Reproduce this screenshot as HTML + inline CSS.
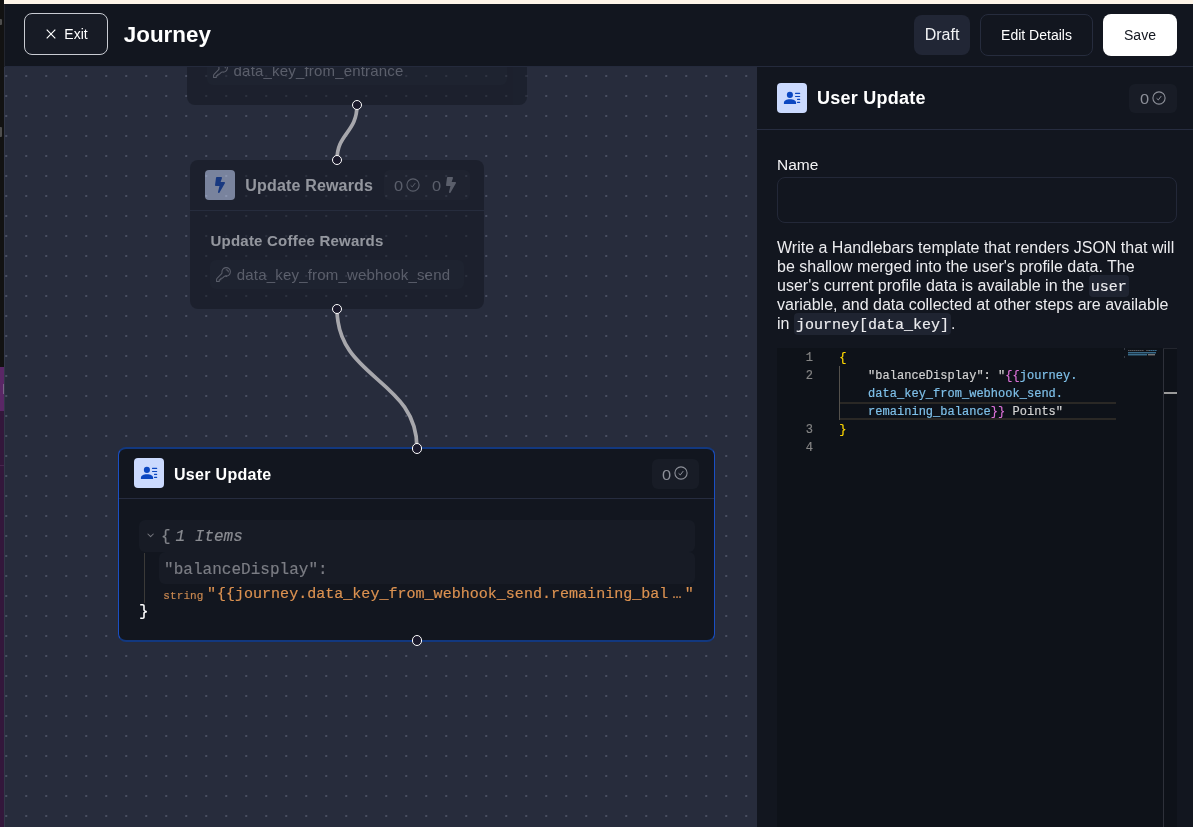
<!DOCTYPE html>
<html>
<head>
<meta charset="utf-8">
<title>Journey</title>
<style>
*{box-sizing:border-box;margin:0;padding:0}
html,body{width:1193px;height:827px;overflow:hidden;background:#12161f;font-family:"Liberation Sans",sans-serif;color:#fff}
.abs{position:absolute}
#header,#canvas,#panel{will-change:transform}
#strip{left:0;top:0;width:4px;height:827px;background:#121212}
#strip .p1{left:0;top:367px;width:4px;height:44px;background:#5a2766}
#strip .p2{left:0;top:411px;width:4px;height:416px;background:#33173b}
#cream{left:4px;top:0;width:1189px;height:4px;background:#fef5e8}
#header{left:4px;top:4px;width:1189px;height:63px;background:#12161f;border-bottom:1px solid #242a3c}
#canvas{left:4px;top:67px;width:753px;height:760px;background-color:#272c3c;
 background-image:radial-gradient(circle, #4a4f62 0.7px, transparent 1.05px);background-size:20px 20px;background-position:-7.75px -1px;overflow:hidden}
#panel{left:757px;top:67px;width:436px;height:760px;background:#12161f}
.btn{position:absolute;border-radius:8px;font-size:14px;display:flex;align-items:center;justify-content:center}
.mono{font-family:"Liberation Mono",monospace;-webkit-text-stroke:.18px currentColor}
.node{position:absolute;background:#12161f;border-radius:8px}
.fade{opacity:.5}
.handle{position:absolute;width:10.4px;height:10.4px;border-radius:50%;border:1.35px solid #fff;background:#1a192b}
.ico30{position:absolute;width:30px;height:30px;border-radius:4px;background:#cbdafe;display:flex;align-items:center;justify-content:center}
.badge{position:absolute;background:#181c26;border-radius:6px;color:#8d9099;font-size:15.6px}
.badge .ln{transform:scale(1.05,.97);transform-origin:0 14.3px}
.sep{position:absolute;height:1px;background:#262c3f}
.ln{position:absolute;white-space:pre}
.code{background:#1f2431;border-radius:4px;padding:3.9px 2px .6px;font-size:15px}
</style>
</head>
<body>
<div id="strip" class="abs"><div class="abs p1"></div><div class="abs p2"></div>
<div class="abs" style="left:0;top:19px;width:1.5px;height:6px;background:#4d4d4d;border-radius:0 1px 1px 0"></div>
<div class="abs" style="left:0;top:127px;width:1.5px;height:10px;background:#4d4d4d;border-radius:0 1px 1px 0"></div>
<div class="abs" style="left:3px;top:384px;width:1px;height:10px;background:#7d6188"></div>
<div class="abs" style="left:0;top:465px;width:4px;height:1px;background:#48264f"></div>
</div>
<div class="abs" style="left:4px;top:67px;width:1px;height:760px;background:#333849;z-index:5"></div>
<div class="abs" style="left:4px;top:4px;width:1px;height:63px;background:#22252e;z-index:5"></div>
<div id="cream" class="abs"></div>

<div id="header" class="abs">
  <div class="btn" style="left:20px;top:9px;width:84px;height:42px;border:1px solid #c9ccd3;background:#171b25;border-radius:8px"></div>
  <svg class="abs" style="left:42px;top:25px" width="10" height="10" viewBox="0 0 10 10"><path d="M0.7 0.7 L9.3 9.3 M9.3 0.7 L0.7 9.3" stroke="#fff" stroke-width="1.15" fill="none"/></svg>
  <div class="ln" style="left:60.3px;top:22px;font-size:14px;line-height:16px">Exit</div>
  <div class="ln" style="left:119.8px;top:18px;font-size:22.4px;font-weight:bold;line-height:26px">Journey</div>
  <div class="btn" style="left:910px;top:11px;width:56px;height:40px;background:#212635;font-size:16px;color:#f2f3f5">Draft</div>
  <div class="btn" style="left:976px;top:10px;width:113px;height:42px;border:1px solid #262c3d;background:#12161f">Edit Details</div>
  <div class="btn" style="left:1099px;top:10px;width:74px;height:42px;background:#fff;color:#12161f">Save</div>
</div>


<div id="canvas" class="abs">
  <!-- node 1 (partial) -->
  <div class="node fade" style="left:183px;top:-40px;width:340px;height:78px;border-radius:8px">
    <div class="abs" style="left:20px;top:26px;width:300px;height:32px;background:#171b25;border-radius:6px"></div>
    <svg class="abs" style="left:24.85px;top:34.85px" width="17" height="17" viewBox="0 0 24 24" fill="none" stroke="#8d9099" stroke-width="1.5" stroke-linecap="round" stroke-linejoin="round"><path d="M15.750 5.250a3 3 0 013 3m3 0a6 6 0 01-7.029 5.912c-.563-.097-1.159.026-1.563.430L10.500 17.250H8.250v2.250H6v2.250H2.250v-2.818c0-.597.237-1.170.659-1.591l6.499-6.499c.404-.404.527-1 .430-1.563A6 6 0 1121.750 8.250z"/></svg>
    <div class="ln" style="left:46.6px;top:34.8px;font-size:15px;line-height:18px;color:#8d9099;letter-spacing:.18px">data_key_from_entrance</div>
  </div>
  <!-- edges -->
  <svg class="abs" style="left:0;top:0" width="753" height="760" fill="none" stroke="#a7a7ac" stroke-width="3.7" stroke-linecap="round">
    <path d="M353 38 C353 66 333 66 333 93"/>
    <path d="M333 242 C333 312 413 312 413 381"/>
  </svg>
  <!-- node 2 -->
  <div class="node fade" style="left:186px;top:93px;width:294px;height:149px">
    <div class="ico30" style="left:15px;top:10px"></div>
    <svg class="abs" style="left:25px;top:17px" width="10" height="16" viewBox="0 0 320 512" fill="#0a45c4"><path d="M296 160H180.600l42.600-129.800C227.200 15 215.700 0 200 0H56C44 0 33.800 8.900 32.200 20.800l-32 240C-1.700 275.200 9.500 288 24 288h118.700L96.600 482.500c-3.600 15.200 8 29.500 23.300 29.500 8.400 0 16.400-4.400 20.800-12l176-304c9.300-15.900-2.200-36-20.700-36z"/></svg>
    <div class="ln" style="left:55.3px;top:16px;font-size:16px;font-weight:bold;line-height:20px;color:#fff;letter-spacing:.17px">Update Rewards</div>
    <div class="badge" style="left:194px;top:10px;width:86px;height:30px">
      <div class="ln" style="left:10px;top:7px;line-height:18px">0</div><svg class="abs" style="left:22px;top:8px" width="14" height="14" viewBox="0 0 14 14" fill="none" stroke="#8d9099" stroke-width="1.1" stroke-linecap="round" stroke-linejoin="round"><circle cx="7" cy="7" r="6.1"/><path d="M4.9 7.6 L6.3 8.95 L9.0 5.4" stroke-width="1"/></svg>
      <div class="ln" style="left:48px;top:7px;line-height:18px">0</div><svg class="abs" style="left:62px;top:7px" width="10" height="16" viewBox="0 0 320 512" fill="#8d9099"><path d="M296 160H180.600l42.600-129.800C227.200 15 215.700 0 200 0H56C44 0 33.800 8.900 32.200 20.800l-32 240C-1.700 275.200 9.500 288 24 288h118.700L96.600 482.500c-3.600 15.200 8 29.500 23.300 29.500 8.400 0 16.400-4.400 20.800-12l176-304c9.300-15.900-2.200-36-20.700-36z"/></svg>
    </div>
    <div class="sep" style="left:0;top:50px;width:294px"></div>
    <div class="ln" style="left:20.5px;top:72px;font-size:15px;font-weight:bold;line-height:18px;color:#fff;letter-spacing:.22px">Update Coffee Rewards</div>
    <div class="abs" style="left:20px;top:100px;width:254px;height:29px;background:#171b25;border-radius:6px"></div>
    <svg class="abs" style="left:24.7px;top:106.3px" width="17" height="17" viewBox="0 0 24 24" fill="none" stroke="#8d9099" stroke-width="1.5" stroke-linecap="round" stroke-linejoin="round"><path d="M15.750 5.250a3 3 0 013 3m3 0a6 6 0 01-7.029 5.912c-.563-.097-1.159.026-1.563.430L10.500 17.250H8.250v2.250H6v2.250H2.250v-2.818c0-.597.237-1.170.659-1.591l6.499-6.499c.404-.404.527-1 .430-1.563A6 6 0 1121.750 8.250z"/></svg>
    <div class="ln" style="left:46.8px;top:105.6px;font-size:15px;line-height:18px;color:#8d9099;letter-spacing:.19px">data_key_from_webhook_send</div>
  </div>
  <!-- node 3 -->
  <div class="node" style="left:114px;top:380px;width:597px;height:195px;border:1px solid #1a4fc4;border-top:2px solid #12387f;border-bottom:2px solid #12387f">
    <div class="ico30" style="left:15px;top:9.4px"><svg width="30" height="30" viewBox="0 0 30 30" fill="#0b47c1"><circle cx="12.9" cy="11.9" r="3.05"/><path d="M6.9 20.9 L6.9 19.7 C6.9 17.5 9.4 16.2 13 16.2 C16.6 16.2 19.1 17.5 19.1 19.7 L19.1 20.9 Z"/><rect x="18" y="9.8" width="5.2" height="1.2" rx=".5"/><rect x="18" y="12.9" width="5.2" height="1.2" rx=".5"/><rect x="20" y="15.8" width="3.2" height="1.2" rx=".5"/><rect x="20" y="18.8" width="3.2" height="1.2" rx=".5"/></svg></div>
    <div class="ln" style="left:55px;top:16px;font-size:16px;font-weight:bold;line-height:20px;color:#fff;letter-spacing:.3px">User Update</div>
    <div class="badge" style="left:533px;top:10.3px;width:47.3px;height:29.4px"><div class="ln" style="left:10px;top:6.7px;line-height:18px">0</div><svg class="abs" style="left:22px;top:7.2px" width="14" height="14" viewBox="0 0 14 14" fill="none" stroke="#8d9099" stroke-width="1.1" stroke-linecap="round" stroke-linejoin="round"><circle cx="7" cy="7" r="6.1"/><path d="M4.9 7.6 L6.3 8.95 L9.0 5.4" stroke-width="1"/></svg></div>
    <div class="sep" style="left:0;top:49px;width:595px"></div>
    <div class="abs" style="left:20px;top:71px;width:556px;height:32px;background:#171b25;border-radius:6px"></div>
    <div class="abs" style="left:39.7px;top:103px;width:536.3px;height:32px;background:#171b25;border-radius:6px"></div>
    <div class="abs" style="left:25px;top:104px;width:1px;height:50px;background:#3b3a38"></div>
    <svg class="abs" style="left:27px;top:83px" width="9" height="7" viewBox="0 0 9 7" fill="none" stroke="#74767d" stroke-width="1.05" stroke-linecap="round" stroke-linejoin="round"><path d="M1.9 2 L4.6 4.7 L7.3 2"/></svg>
    <div class="ln mono" style="left:42px;top:77.5px;font-size:16px;line-height:20px;color:#808389">{</div>
    <div class="ln mono" style="left:56.6px;top:77.5px;font-size:16px;line-height:20px;color:#8a8c92;font-style:italic">1 Items</div>
    <div class="ln mono" style="left:45px;top:110.5px;font-size:16px;line-height:20px;color:#7b7d84;letter-spacing:.03px">"balanceDisplay":</div>
    <div class="ln mono" style="left:44.3px;top:139.5px;font-size:11px;line-height:14px;color:#c98850;letter-spacing:.1px">string</div>
    <div class="ln mono" style="left:87.9px;top:135px;font-size:15.05px;line-height:20px;color:#dc9251">"</div>
    <div class="ln mono" style="left:97.9px;top:135px;font-size:15.05px;line-height:20px;color:#dc9251">{{journey.data_key_from_webhook_send.remaining_bal</div>
    <div class="ln mono" style="left:553.5px;top:135px;font-size:15.05px;line-height:20px;color:#dc9251">…</div>
    <div class="ln mono" style="left:565.7px;top:135px;font-size:15.05px;line-height:20px;color:#dc9251">"</div>
    <div class="ln mono" style="left:20px;top:153px;font-size:16px;line-height:20px;color:#fff">}</div>
  </div>
  <div class="handle" style="left:347.8px;top:33px"></div>
  <div class="handle" style="left:328px;top:88.1px"></div>
  <div class="handle" style="left:328px;top:236.6px"></div>
  <div class="handle" style="left:407.8px;top:376.3px"></div>
  <div class="handle" style="left:407.8px;top:568.3px"></div>
</div>


<div id="panel" class="abs">
  <div class="ico30" style="left:20px;top:16px"><svg width="30" height="30" viewBox="0 0 30 30" fill="#0b47c1"><circle cx="12.9" cy="11.9" r="3.05"/><path d="M6.9 20.9 L6.9 19.7 C6.9 17.5 9.4 16.2 13 16.2 C16.6 16.2 19.1 17.5 19.1 19.7 L19.1 20.9 Z"/><rect x="18" y="9.8" width="5.2" height="1.2" rx=".5"/><rect x="18" y="12.9" width="5.2" height="1.2" rx=".5"/><rect x="20" y="15.8" width="3.2" height="1.2" rx=".5"/><rect x="20" y="18.8" width="3.2" height="1.2" rx=".5"/></svg></div>
  <div class="ln" style="left:60px;top:20px;font-size:18px;font-weight:bold;line-height:22px;letter-spacing:.25px">User Update</div>
  <div class="badge" style="left:372px;top:17px;width:48px;height:29px"><div class="ln" style="left:10.5px;top:5.7px;line-height:18px">0</div><svg class="abs" style="left:23px;top:6.5px" width="14" height="14" viewBox="0 0 14 14" fill="none" stroke="#8d9099" stroke-width="1.1" stroke-linecap="round" stroke-linejoin="round"><circle cx="7" cy="7" r="6.1"/><path d="M4.9 7.6 L6.3 8.95 L9.0 5.4" stroke-width="1"/></svg></div>
  <div class="sep" style="left:0;top:62px;width:436px"></div>
  <div class="ln" style="left:20px;top:89.3px;font-size:15.5px;line-height:18px;color:#f4f4f6">Name</div>
  <div class="abs" style="left:20px;top:110px;width:400px;height:46px;border:1px solid #232838;border-radius:8px"></div>
  <div id="para" style="color:#ececef;font-size:16px">
   <div class="ln" style="left:20px;top:171px;line-height:19px">Write a Handlebars template that renders JSON that will</div>
   <div class="ln" style="left:20px;top:190px;line-height:19px">be shallow merged into the user's profile data. The</div>
   <div class="ln" style="left:20px;top:209px;line-height:19px">user's current profile data is available in the <span class="code mono">user</span></div>
   <div class="ln" style="left:20px;top:228px;line-height:19px">variable, and data collected at other steps are available</div>
   <div class="ln" style="left:20px;top:247px;line-height:19px">in <span class="code mono">journey[data_key]</span>.</div>
  </div>
  <div id="editor" class="abs mono" style="left:20px;top:281px;width:400px;height:479px;background:#0e1219;font-size:12px;line-height:18px">
    <div class="ln" style="left:0;top:.5px;width:36px;text-align:right;color:#858585">1
2


3
4</div>
    <div class="abs" style="left:62px;top:18px;width:1px;height:54px;background:#54514c"></div>
    <div class="abs" style="left:63px;top:54px;width:276px;height:18px;border-top:2px solid #2a2825;border-bottom:2px solid #2a2825"></div>
    <div class="ln" style="left:62.2px;top:.5px;color:#d4d4d4;letter-spacing:.02px"><span style="color:#ffd700">{</span>
    "balanceDisplay": "<span style="color:#da70d6">{{</span><span style="color:#7fc1ea">journey.</span>
    <span style="color:#7fc1ea">data_key_from_webhook_send.</span>
    <span style="color:#7fc1ea">remaining_balance</span><span style="color:#da70d6">}}</span> Points"
<span style="color:#ffd700">}</span></div>
    <div class="abs" style="left:347px;top:0px;width:1px;height:2px;background:#353944"></div>
    <div class="abs" style="left:347px;top:8px;width:1px;height:2px;background:#353944"></div>
    <div class="abs" style="left:351px;top:2px;width:16px;height:1px;background:repeating-linear-gradient(90deg,#56585c 0 1.4px,#3a3c40 1.4px 2px)"></div>
    <div class="abs" style="left:369px;top:2px;width:3px;height:1px;background:#4c4e52"></div>
    <div class="abs" style="left:372px;top:2px;width:8px;height:1px;background:repeating-linear-gradient(90deg,#3b6c8b 0 1.4px,#2a4d64 1.4px 2px)"></div>
    <div class="abs" style="left:351px;top:4px;width:28px;height:2px;background:linear-gradient(#3a6b8a 50%,#1f3a4c 50%)"></div>
    <div class="abs" style="left:351px;top:6px;width:19px;height:2px;background:linear-gradient(#3a6b8a 50%,#1f3a4c 50%)"></div>
    <div class="abs" style="left:371px;top:6px;width:7px;height:2px;background:linear-gradient(#747577 50%,#38393c 50%)"></div>
    <div class="abs" style="left:386px;top:0;width:1px;height:479px;background:#2e313a"></div>
    <div class="abs" style="left:386px;top:0;width:14px;height:1px;background:#23262e"></div>
    <div class="abs" style="left:387px;top:44px;width:13px;height:2px;background:#9a9a9a"></div>
  </div>
</div>

</body>
</html>
